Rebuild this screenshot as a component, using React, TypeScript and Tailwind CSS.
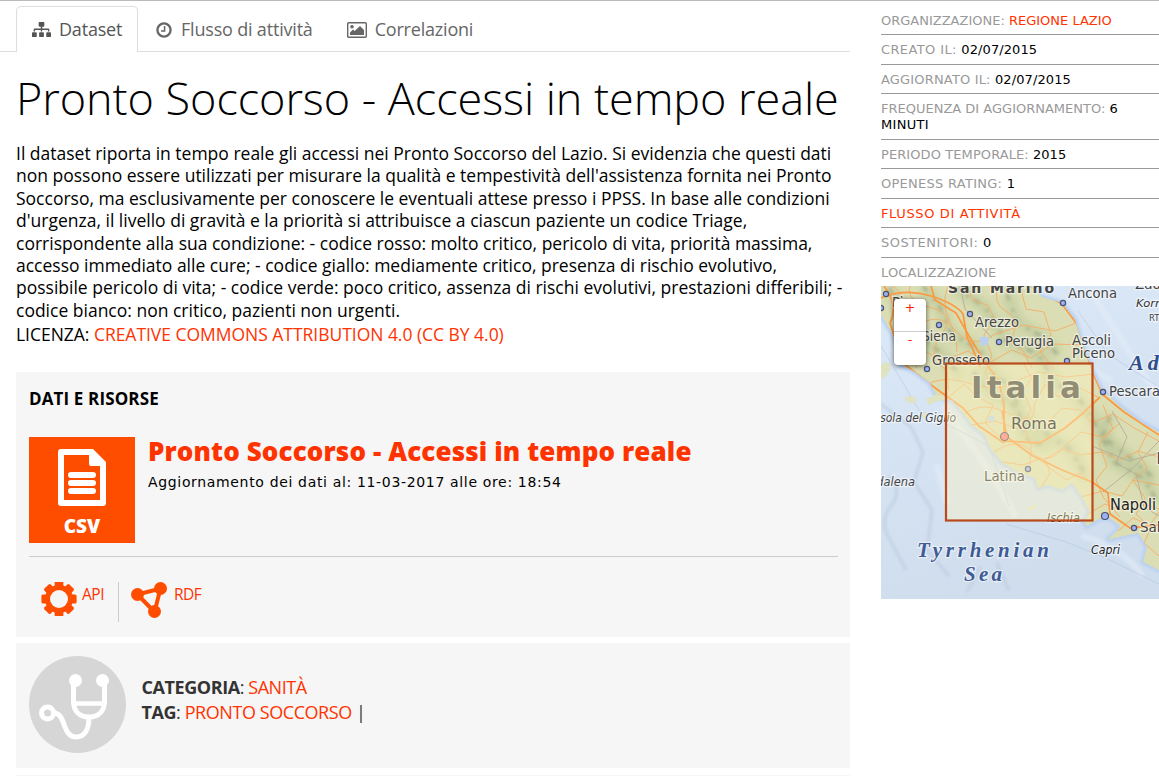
import type { ReactNode } from "react";
import { FaSitemap } from "react-icons/fa";

const paragraph = [
  "Il dataset riporta in tempo reale gli accessi nei Pronto Soccorso del Lazio. Si evidenzia che questi dati",
  "non possono essere utilizzati per misurare la qualità e tempestività dell'assistenza fornita nei Pronto",
  "Soccorso, ma esclusivamente per conoscere le eventuali attese presso i PPSS. In base alle condizioni",
  "d'urgenza, il livello di gravità e la priorità si attribuisce a ciascun paziente un codice Triage,",
  "corrispondente alla sua condizione: - codice rosso: molto critico, pericolo di vita, priorità massima,",
  "accesso immediato alle cure; - codice giallo: mediamente critico, presenza di rischio evolutivo,",
  "possibile pericolo di vita; - codice verde: poco critico, assenza di rischi evolutivi, prestazioni differibili; -",
  "codice bianco: non critico, pazienti non urgenti.",
];

function ClockIcon() {
  return (
    <svg width="16" height="16" viewBox="0 0 16 16" fill="none" stroke="#666" strokeWidth="2">
      <circle cx="8" cy="8" r="6.6" strokeWidth="2.3" />
      <path d="M8.6 4v5H5" strokeWidth="1.5" />
    </svg>
  );
}

function PictureIcon() {
  return (
    <svg width="20" height="16" viewBox="0 0 20 16">
      <rect x="0.7" y="0.7" width="18.6" height="14.6" rx="1" fill="none" stroke="#666" strokeWidth="1.4" />
      <circle cx="5" cy="4.8" r="1.8" fill="#666" />
      <path d="M3 13v-2.6l3-3 1.7 1.7L13 4l4 4v5z" fill="#666" />
    </svg>
  );
}

function CsvIcon() {
  return (
    <svg className="mx-auto" width="48" height="57" viewBox="0 0 48 57">
      <path fill="#fff" fillRule="evenodd" d="M2 0h33l13 13v41a3 3 0 0 1-3 3H3a3 3 0 0 1-3-3V3a3 3 0 0 1 3-3zM6 6v45h36V17H33a2 2 0 0 1-2-2V6z" />
      <path d="M13 26h22M13 34h22M13 42h22" stroke="#fff" strokeWidth="6" strokeLinecap="round" />
    </svg>
  );
}

function GearIcon() {
  return (
    <svg width="36" height="34" viewBox="-18 -17 36 34">
      <g fill="#ff4d00">
        {[0, 45, 90, 135].map((a) => (
          <rect key={a} x="-4.4" y="-17.6" width="8.8" height="35.2" rx="1.5" transform={`rotate(${a})`} />
        ))}
        <circle r="14" />
      </g>
      <circle r="9" fill="#f6f6f6" />
    </svg>
  );
}

function RdfIcon() {
  return (
    <svg width="36" height="36" viewBox="0 0 36 36" fill="#ff4d00">
      <path d="M6.500 12.500 29.500 6.500 23.500 30z" fill="none" stroke="#ff4d00" strokeWidth="4" />
      <circle cx="6.500" cy="12.500" r="6.500" />
      <circle cx="29.500" cy="6.500" r="6.500" />
      <circle cx="23.500" cy="29.500" r="6.500" />
    </svg>
  );
}

function StethoscopeIcon() {
  return (
    <svg width="97" height="97" viewBox="0 0 97 97">
      <circle cx="48.500" cy="48.500" r="48.500" fill="#d6d6d6" />
      <circle cx="46.500" cy="24.500" r="6.500" fill="#fff" />
      <circle cx="73.500" cy="24.500" r="6.500" fill="#fff" />
      <g fill="none" stroke="#fff" strokeWidth="5">
        <path d="M44.500 26v19c0 10 6 16 15.500 16s15.500-6 15.500-16V26" />
        <path d="M45 47.500h30" strokeWidth="4.500" />
        <path d="M60 61c0 12-4 20-13 20-14 0-10-24-22-24" />
        <circle cx="18.500" cy="57" r="6" />
      </g>
    </svg>
  );
}

const LAND =
  "M0 0H149L161 11 181 17 194 34 201 57 211 84 219 102 241 122 261 137 278 146V284L262 276 266 261 257 247 238 251 226 254 236 245 239 240 228 232 218 233 206 240 203 236 209 226 201 211 191 197 181 204 167 199 157 202 154 192 136 186 121 176 109 162 104 149 91 139 82 127 71 114 56 111 49 97 34 86 21 79 17 63 11 47 0 29Z";

const MAJOR = [
  "M0 12Q25 2 50 10T82 28L86 51Q94 67 99 81",
  "M3 0Q18 20 9 37L22 77 50 99 82 122 98 140 123 157",
  "M50 0 54 14 75 27 88 50 103 75 118 95 123 120 123 157",
  "M149 0 181 18 196 38 205 67 215 94 221 108 243 126 278 149",
  "M121 125 126 151 152 170 181 184 211 196 227 207 229 228 249 242 278 239",
  "M123 155 159 157 184 142 201 128 219 111",
];

const MINOR = [
  "M11 0Q27 8 22 35T29 68L36 82", "M29 0Q24 15 51 22T56 54L52 73 66 85 68 104",
  "M67 0Q60 18 68 34T76 66", "M86 0 92 14 106 19 114 33 103 49 111 70 104 86 111 102",
  "M117 0Q111 18 126 26T129 55L142 65 151 82", "M139 0 145 23 163 26 170 49 159 65 173 83",
  "M35 41Q57 24 74 44T112 49L142 39 174 45 198 36", "M22 68 46 66 61 75 87 65 108 77 131 64 150 72 172 58 201 59",
  "M43 100Q62 88 91 98T137 94L158 86 184 91 214 88", "M68 111 83 98 96 111 112 119 104 137 122 154",
  "M83 128Q102 114 129 128T153 119L164 98 177 111 199 102 219 112",
  "M90 139 114 135 137 143 147 132 165 139 181 122 199 124 211 137 232 128 253 142 278 155",
  "M113 166Q137 150 151 166T184 160L200 146 222 151 239 137", "M121 176 142 179 159 173 171 184 186 194 199 187 211 197",
  "M160 202 169 187 164 173 181 163 199 169 221 166 239 174 257 165 278 171",
  "M200 211 222 205 241 210 252 194 278 199", "M207 228 224 218 239 224 254 215 278 223",
  "M237 245 252 232 269 239 278 226", "M222 119 232 143 218 158 226 180 215 194 222 211 239 231",
  "M267 146 257 166 266 182 252 194 264 212 255 228 270 242 263 257 278 270", "M142 77 151 92 142 105 150 124 141 139 150 158 149 179",
];

const RIDGES = [
  "M42 0l18 23 10 25 28 15 12 23 23 18 6 28 27 16 24 16 17 29", "M72 0l32 21 20 33 33 14 17 28 25 18 24 38 25 19 26 22",
  "M8 2l18 31 17 20 22 18 15 21", "M229 130l-8 21 12 25 30 17 14 24", "M92 86l20 23 23 11 10 33 24 9", "M126 8l10 28 24 14 17 19",
];

const DOTS: [number, number][] = [[5, 8], [0, 22], [58, 39], [89, 28], [118, 56], [182, 17], [46, 83], [186, 75], [222, 106], [147, 183], [253, 242]];

interface LabelProps {
  x: number;
  y: number;
  w?: number;
  size?: number;
  className?: string;
  spaced?: boolean;
  children: ReactNode;
}

function Label({ x, y, w, size = 13.5, className = "fill-[#444]", spaced, children }: LabelProps) {
  return (
    <text
      x={x}
      y={y}
      textLength={w}
      lengthAdjust={spaced ? "spacing" : "spacingAndGlyphs"}
      fontSize={size}
      className={className}
      stroke="#fff"
      strokeOpacity="0.5"
      strokeWidth="2.500"
      paintOrder="stroke"
    >
      {children}
    </text>
  );
}

function MapView() {
  return (
    <svg className="block font-['DejaVu_Sans',sans-serif]" width="278" height="313" viewBox="0 0 278 313">
      <defs>
        <clipPath id="land"><path d={LAND} /></clipPath>
        <filter id="soft"><feGaussianBlur stdDeviation="5" /></filter>
        <filter id="haze"><feGaussianBlur stdDeviation="1.800" /></filter>
        <linearGradient id="sea" x2="0.3" y2="1">
          <stop stopColor="#dce9f8" />
          <stop offset="1" stopColor="#cfdded" />
        </linearGradient>
      </defs>
      <rect width="278" height="313" fill="url(#sea)" />
      <g fill="none" filter="url(#haze)">
        <path d="M8 190Q22 205 10 220T8 252L25 284M0 118l30 23 12 25-9 30 18 28-5 40 22 26M100 280l-14 26M116 277l12 28" stroke="#b9c8dc" strokeWidth="2.500" opacity="0.7" />
        <path d="M62 120q18 25 33 46t40 65M184 40q20 45 47 55M210 6l39 61 29 45M56 178l10 40M200 250q40 10 62 40" stroke="#e4edf8" strokeWidth="6" opacity="0.6" />
      </g>
      <path d="M125 238l60 18 40 16 53 26M197 25l30 43 48 31M0 60l38 64 70 36 20 60" fill="none" stroke="#b4c5df" strokeWidth="0.8" opacity="0.7" />
      <path d={LAND} fill="none" stroke="#b9d0f2" strokeWidth="5" filter="url(#haze)" />
      <path d={LAND} fill="#dbdeb4" />
      <g clipPath="url(#land)">
        <g fill="none" filter="url(#soft)">
          {RIDGES.map((d) => <path key={d} d={d} stroke="#afc08f" strokeWidth="12" opacity="0.5" />)}
        </g>
        <g fill="none" filter="url(#haze)">
          {RIDGES.map((d) => <path key={d} d={d} stroke="#8f9a7c" strokeWidth="3.500" strokeDasharray="7 9 3 6" opacity="0.5" />)}
        </g>
        <g fill="none" stroke="#f5ad65" strokeWidth="0.9" strokeLinejoin="round">
          {MINOR.map((d) => <path key={d} d={d} />)}
        </g>
        <g fill="none" stroke="#b5ad98" strokeWidth="0.9">
          <path d="M231 125l15 26-11 26 20 11 8 33 15 9M278 155l-27 28-29 23M211 160l37 15 30-8M79 0l5 23 27 29" />
        </g>
        <g fill="none" stroke="#fa9a42" strokeWidth="1.8" strokeLinejoin="round">
          {MAJOR.map((d) => <path key={d} d={d} />)}
        </g>
      </g>
      <g fill="#dfe3bf">
        <path d="M0 79l4-3 6 2-1 6-4 6-5 3zM24 111l8-1 4 4-4 4-7-3zM45 113l9-4 9 1 2 4-9 1-8 4zM42 126l4 2-1 5-4-2zM145 223l8-4 4-2-2 4-5 4z" />
      </g>
      <path d="M98 52l6-2 4 3-1 6-6 1zM107 131l4-2 3 3-2 4-4-1z" fill="#b9d0ef" />
      <g fill="#9fb1f5" stroke="#4a526f" strokeWidth="1.200">
        {DOTS.map(([cx, cy]) => <circle key={`${cx}-${cy}`} cx={cx} cy={cy} r="2.600" />)}
        <circle cx="224" cy="230" r="3.500" />
        <circle cx="123.500" cy="150.500" r="4" fill="#ff7a75" />
      </g>
      <Label x={11} y={21}>Pi</Label>
      <Label x={67} y={7} w={106} size={14} className="fill-[#444] font-bold" spaced>San Marino</Label>
      <Label x={187} y={12} w={49}>Ancona</Label>
      <Label x={254} y={3}>Zadar</Label>
      <Label x={255} y={21} w={41} size={11} className="fill-[#333] italic">Kornati</Label>
      <Label x={268} y={35} size={8.5}>RTM</Label>
      <Label x={94} y={41} w={44}>Arezzo</Label>
      <Label x={41} y={55} w={34}>Siena</Label>
      <Label x={124} y={60} w={49}>Perugia</Label>
      <Label x={191} y={59} w={39}>Ascoli</Label>
      <Label x={191} y={72} w={43}>Piceno</Label>
      <Label x={51} y={79} w={58}>Grosseto</Label>
      <Label x={228} y={110} w={51}>Pescara</Label>
      <Label x={-4} y={136} w={79} size={11.5} className="fill-[#444] italic">Isola del Giglio</Label>
      <Label x={-12} y={200} w={46} size={11.5} className="fill-[#444] italic">ddalena</Label>
      <Label x={275.500} y={178} size={15}>F</Label>
      <Label x={90} y={112} w={110} size={31} className="fill-[#44443f] font-bold" spaced>Italia</Label>
      <Label x={130} y={143} w={46} size={16.5} className="fill-[#111]">Roma</Label>
      <Label x={103} y={195} w={41} className="fill-[#333]">Latina</Label>
      <Label x={166} y={236} w={33} size={11.5} className="fill-[#222] italic">Ischia</Label>
      <g className="font-['Liberation_Serif',serif] font-bold italic">
        <Label x={248} y={84} size={22} className="fill-[#2f4d89]"><tspan letterSpacing="4">Ad</tspan></Label>
        <Label x={36} y={271} w={132} size={21} className="fill-[#3e5b94]" spaced>Tyrrhenian</Label>
        <Label x={83} y={295} w={38} size={21} className="fill-[#3e5b94]" spaced>Sea</Label>
      </g>
      <rect x="65" y="77.500" width="146.500" height="157" fill="#fff6c4" fillOpacity="0.42" stroke="#b94a1c" strokeWidth="2.200" />
      <Label x={229} y={224} w={46} size={15.5} className="fill-[#222] font-medium">Napoli</Label>
      <Label x={259} y={246}>Salerno</Label>
      <Label x={210} y={268} w={29} size={11.5} className="fill-[#222] italic">Capri</Label>
    </svg>
  );
}

interface RowProps {
  label?: string;
  h: string;
  spacing?: string;
  children?: ReactNode;
}

function Row({ label, h, spacing = "", children }: RowProps) {
  return (
    <div className={`border-b border-[#999] pt-[7px] ${h}`}>
      {label && <span className={`text-[#999] ${spacing}`}>{label} </span>}
      {children}
    </div>
  );
}

export default function App() {
  return (
    <div className="flex h-[776px] w-[1159px] overflow-hidden border-t border-[#bbb] bg-white font-['Open_Sans',sans-serif] text-black">
      <main className="w-[850px] shrink-0">
        <nav className="flex h-[51px] items-end border-b border-[#ddd] pl-4 text-[18px] text-[#666]">
          <div className="-mb-px flex h-[46px] w-[122px] items-center gap-2 rounded-t-[5px] border border-b-0 border-[#ddd] bg-white pl-[15px] text-[#555]">
            <FaSitemap size={19} />
            <span className="tracking-[-0.2px]">Dataset</span>
          </div>
          <div className="flex h-[46px] items-center gap-[9px] pt-[3px] pl-[18px]">
            <ClockIcon />
            <span className="tracking-[-0.19px] whitespace-nowrap">Flusso di attività</span>
          </div>
          <div className="flex h-[46px] items-center gap-2 pt-[3px] pl-[34px]">
            <PictureIcon />
            <span className="tracking-[-0.2px]">Correlazioni</span>
          </div>
        </nav>

        <h1 className="mt-[13px] ml-4 h-[66px] text-[45px] leading-[66px] font-light tracking-[-0.05px] whitespace-nowrap">Pronto Soccorso - Accessi in tempo reale</h1>

        <div className="mt-[11px] ml-4 text-[17.5px] leading-[22.4px] whitespace-nowrap">
          {paragraph.map((line) => <p key={line}>{line}</p>)}
          <p className="mt-[2px] tracking-[-0.03px]">LICENZA: <span className="text-[#ff3300]">CREATIVE COMMONS ATTRIBUTION 4.0 (CC BY 4.0)</span></p>
        </div>

        <section className="mt-[26px] ml-4 h-[265px] bg-[#f6f6f6] px-[13px]">
          <h2 className="pt-[15px] text-[17px] leading-6 font-bold tracking-[0.13px]">DATI E RISORSE</h2>
          <div className="mt-[26px] mr-[-1px] flex h-[120px] w-[809px] gap-[13px] border-b border-[#ccc]">
            <div className="h-[106px] w-[106px] bg-[#ff4d00] pt-3 text-center text-[19px] leading-6 font-extrabold text-white">
              <CsvIcon />
              <div className="mt-2">CSV</div>
            </div>
            <div className="-mt-px whitespace-nowrap">
              <h3 className="text-[26px] leading-[30px] font-extrabold tracking-[0.12px] text-[#ff3300]">Pronto Soccorso - Accessi in tempo reale</h3>
              <p className="mt-[6px] font-['DejaVu_Sans',sans-serif] text-[14px] leading-5 tracking-[0.66px]">Aggiornamento dei dati al: 11-03-2017 alle ore: 18:54</p>
            </div>
          </div>
          <div className="mt-[25px] flex pl-3 text-[15.5px] text-[#ff3300]">
            <GearIcon />
            <span className="ml-[5px] w-9 leading-6 tracking-[-0.5px]">API</span>
            <span className="mr-3 h-10 w-px bg-[#ccc]" />
            <RdfIcon />
            <span className="ml-[7px] leading-6 tracking-[-0.5px]">RDF</span>
          </div>
        </section>

        <section className="mt-[6px] ml-4 flex h-[125px] items-start gap-[15.500px] bg-[#f6f6f6] pt-[13px] pl-[13px]">
          <StethoscopeIcon />
          <div className="mt-[19px] text-[18px] leading-[25px] tracking-[-0.43px] text-[#333]">
            <p><b>CATEGORIA</b>: <span className="text-[#ff3300]">SANITÀ</span></p>
            <p><b>TAG</b>: <span className="text-[#ff3300]">PRONTO SOCCORSO</span> |</p>
          </div>
        </section>
        <div className="mt-[7px] ml-4 h-2 bg-[#f6f6f6]" />
      </main>

      <aside className="ml-[31px] w-[278px] shrink-0 pt-[5px] font-['DejaVu_Sans',sans-serif] text-[13px] leading-4">
        <Row h="h-[29px]" label="ORGANIZZAZIONE:"><span className="text-[#ff3300]">REGIONE LAZIO</span></Row>
        <Row h="h-[30px]" label="CREATO IL:" spacing="tracking-[0.38px]"><span className="tracking-[0.1px]">02/07/2015</span></Row>
        <Row h="h-[29px]" label="AGGIORNATO IL:" spacing="tracking-[0.17px]"><span className="tracking-[0.1px]">02/07/2015</span></Row>
        <Row h="h-[46px]" label="FREQUENZA DI AGGIORNAMENTO:">6<br /><span className="tracking-[0.3px]">MINUTI</span></Row>
        <Row h="h-[29px]" label="PERIODO TEMPORALE:" spacing="tracking-[0.09px]">2015</Row>
        <Row h="h-[30px]" label="OPENESS RATING:" spacing="tracking-[0.27px]">1</Row>
        <Row h="h-[29px]"><span className="tracking-[0.63px] text-[#ff3300]">FLUSSO DI ATTIVITÀ</span></Row>
        <Row h="h-[30px]" label="SOSTENITORI:" spacing="tracking-[0.46px]">0</Row>
        <div className="h-[28px] pt-[7px] tracking-[0.12px] text-[#999]">LOCALIZZAZIONE</div>
        <div className="relative h-[313px] w-[278px] overflow-hidden">
          <MapView />
          <div className="absolute top-[13px] left-[13px] w-8 rounded-[4px] bg-white text-center text-[#ff2200] shadow-[0_1px_5px_rgba(0,0,0,0.65)]">
            <div className="h-[33px] border-b border-[#ccc] pt-px">+</div>
            <div className="h-[33px]">-</div>
          </div>
        </div>
      </aside>
    </div>
  );
}
